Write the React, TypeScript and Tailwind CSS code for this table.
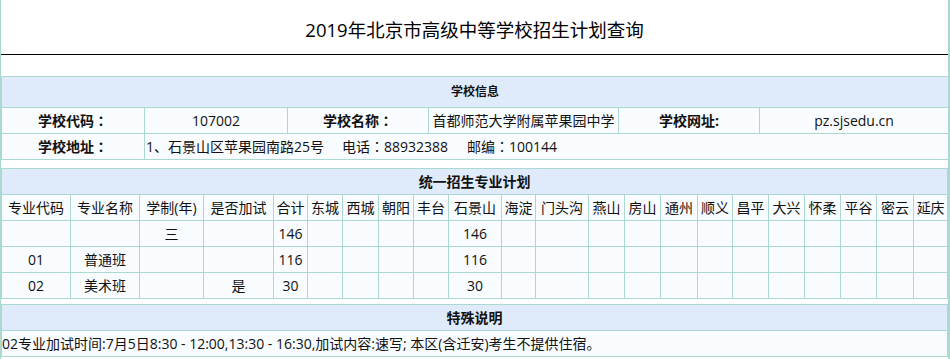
import type React from 'react';

const planCols = [69, 69, 64, 70, 34, 35, 36, 35, 35, 53, 34, 53, 36, 36, 37, 35, 36, 36, 36, 36, 37, 34];

const planHead = [
  '专业代码', '专业名称', '学制(年)', '是否加试', '合计', '东城', '西城', '朝阳', '丰台', '石景山', '海淀',
  '门头沟', '燕山', '房山', '通州', '顺义', '昌平', '大兴', '怀柔', '平谷', '密云', '延庆',
];

const planRows: string[][] = [
  ['', '', '三', '', '146', '', '', '', '', '146'],
  ['01', '普通班', '', '', '116', '', '', '', '', '116'],
  ['02', '美术班', '', '是', '30', '', '', '', '', '30'],
];

const cell = 'border border-[#abd9d1] bg-[#f8fcff] p-0 text-center';
const head = 'border border-[#abd9d1] bg-[#dfebfa] p-0 text-center font-bold';

// full-width colon centred in its box, as in the original page
const Colon = () => (
  <span style={{ fontFamily: '"Noto Sans CJK TC", sans-serif' }}>：</span>
);

const App: React.FC = () => {
  return (
    <div
      className="h-[359px] w-[950px] overflow-hidden border-l border-r-2 border-[#abd9d1] bg-white text-[14px] text-[#111]"
      style={{ fontFamily: '"Open Sans", "Noto Sans CJK SC", sans-serif' }}
    >
      <div className="flex h-[55px] items-start justify-center border-b border-black pt-[17px] text-[18.5px] leading-[26px] text-black">
        2019年北京市高级中等学校招生计划查询
      </div>

      {/* 学校信息 */}
      <table className="mt-[21px] w-[947px] table-fixed border-collapse">
        <colgroup>
          <col className="w-[143px]" />
          <col className="w-[143px]" />
          <col className="w-[141px]" />
          <col className="w-[190px]" />
          <col className="w-[141px]" />
          <col className="w-[189px]" />
        </colgroup>
        <tbody>
          <tr className="h-[31px]">
            <td colSpan={6} className={`${head} text-[12px]`}>学校信息</td>
          </tr>
          <tr className="h-[26px]">
            <td className={`${cell} font-bold`}>学校代码<Colon /></td>
            <td className={cell}>107002</td>
            <td className={`${cell} font-bold`}>学校名称<Colon /></td>
            <td className={`${cell} whitespace-nowrap`}>首都师范大学附属苹果园中学</td>
            <td className={`${cell} font-bold`}>学校网址:</td>
            <td className={cell}>pz.sjsedu.cn</td>
          </tr>
          <tr className="h-[26px]">
            <td className={`${cell} font-bold`}>学校地址<Colon /></td>
            <td colSpan={5} className={`${cell} pl-px text-left`}>
              1、石景山区苹果园南路25号
              <span className="ml-[18px]">电话<Colon />88932388</span>
              <span className="ml-[19px]">邮编<Colon />100144</span>
            </td>
          </tr>
        </tbody>
      </table>

      {/* 统一招生专业计划 */}
      <table className="mt-[8px] w-[947px] table-fixed border-collapse">
        <colgroup>
          {planCols.map((w, i) => (
            <col key={i} style={{ width: w }} />
          ))}
        </colgroup>
        <tbody>
          <tr className="h-[26px]">
            <td colSpan={22} className={head}>统一招生专业计划</td>
          </tr>
          <tr className="h-[26px]">
            {planHead.map((h) => (
              <td key={h} className={`${cell} whitespace-nowrap`}>{h}</td>
            ))}
          </tr>
          {planRows.map((r, i) => (
            <tr key={i} className="h-[26px]">
              {planHead.map((_, j) => (
                <td key={j} className={cell}>{r[j] ?? ''}</td>
              ))}
            </tr>
          ))}
        </tbody>
      </table>

      {/* 特殊说明 */}
      <table className="mt-[5px] w-[947px] border-collapse">
        <tbody>
          <tr className="h-[26px]">
            <td className={head}>特殊说明</td>
          </tr>
          <tr className="h-[26px]">
            <td className={`${cell} text-left`}>
              02专业加试时间:7月5日8:30 - 12:00,13:30 - 16:30,加试内容:速写; 本区(含迁安)考生不提供住宿。
            </td>
          </tr>
        </tbody>
      </table>
    </div>
  );
};

export default App;
